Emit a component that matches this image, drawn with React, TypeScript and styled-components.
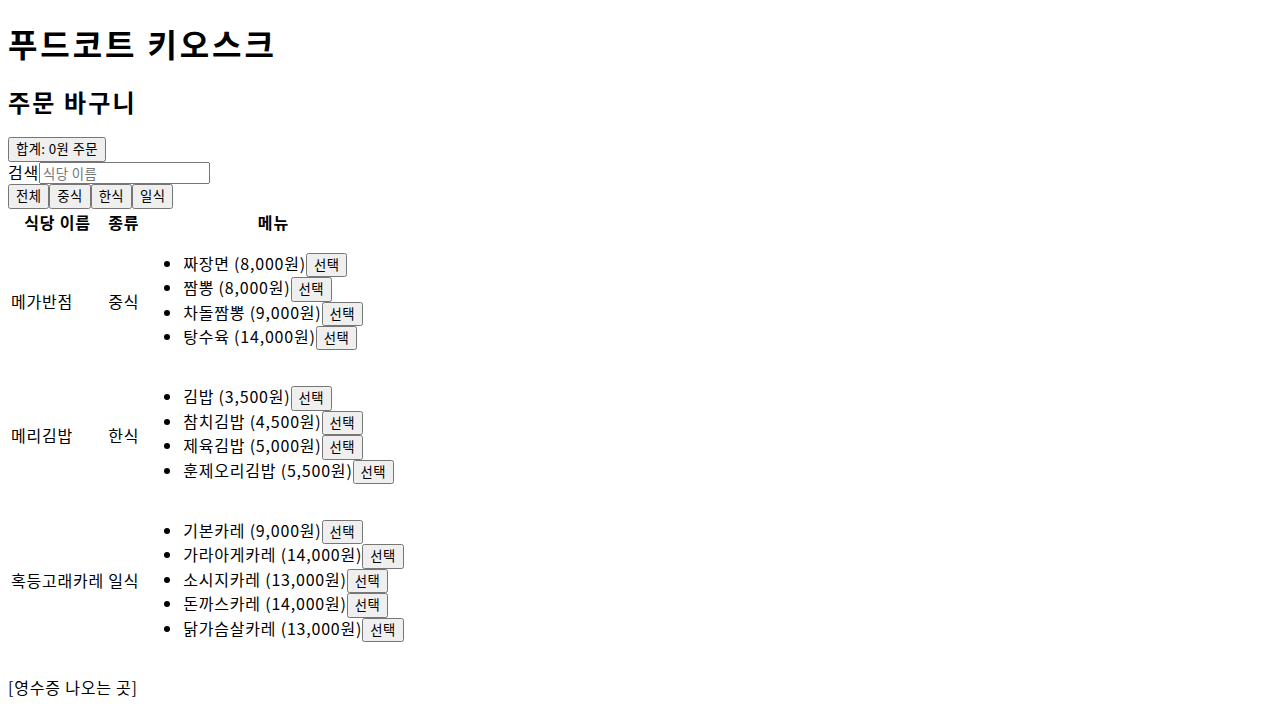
import React, { useState } from 'react'
import styled, { createGlobalStyle } from 'styled-components'

type MenuItem = { name: string; price: number }
type Restaurant = { name: string; kind: string; menus: MenuItem[] }

const restaurants: Restaurant[] = [
  {
    name: '메가반점',
    kind: '중식',
    menus: [
      { name: '짜장면', price: 8000 },
      { name: '짬뽕', price: 8000 },
      { name: '차돌짬뽕', price: 9000 },
      { name: '탕수육', price: 14000 },
    ],
  },
  {
    name: '메리김밥',
    kind: '한식',
    menus: [
      { name: '김밥', price: 3500 },
      { name: '참치김밥', price: 4500 },
      { name: '제육김밥', price: 5000 },
      { name: '훈제오리김밥', price: 5500 },
    ],
  },
  {
    name: '혹등고래카레',
    kind: '일식',
    menus: [
      { name: '기본카레', price: 9000 },
      { name: '가라아게카레', price: 14000 },
      { name: '소시지카레', price: 13000 },
      { name: '돈까스카레', price: 14000 },
      { name: '닭가슴살카레', price: 13000 },
    ],
  },
]

const kinds = ['전체', '중식', '한식', '일식']

const fontStack = `'Noto Sans CJK KR', 'Noto Sans', sans-serif`

const GlobalStyle = createGlobalStyle`
  body {
    margin: 8px;
    font-family: ${fontStack};
    font-size: 16px;
    line-height: 1.33;
    letter-spacing: 0.05em;
    color: #000;
    background: #fff;
  }
  button, input {
    font-family: ${fontStack};
    font-size: 13.33px;
    letter-spacing: 0.03em;
  }
`

const Title = styled.h1`
  font-size: 32px;
  font-weight: 700;
  letter-spacing: 0.09em;
  margin: 14px 0 21px;
`

const SubTitle = styled.h2`
  font-size: 24px;
  font-weight: 700;
  letter-spacing: 0.09em;
  margin: 19.92px 0;
`

const Block = styled.div``

const PlainButton = styled.button`
  padding: 1px 6px;
  margin: 0;
  line-height: 1.38;
  color: #000;
`

const SearchLabel = styled.label``

const SearchInput = styled.input`
  box-sizing: border-box;
  width: 171px;
  height: 22px;
  padding: 1px 2px;
  margin: 0;
  line-height: 1.33;
  &::placeholder {
    color: #757575;
  }
`

const MenuTable = styled.table`
  border-spacing: 2px;
`

const HeadCell = styled.th`
  padding: 1px;
  font-weight: 700;
`

const Cell = styled.td`
  padding: 1px;
  vertical-align: middle;
`

const MenuList = styled.ul`
  margin: 16px 0;
  padding-left: 40px;
  list-style: disc;
`

const Receipt = styled.p`
  margin: 16px 0;
`

const won = (n: number) => n.toLocaleString('en-US') + '원'

export default function App() {
  const [keyword, setKeyword] = useState('')
  const [kind, setKind] = useState('전체')

  const shown = restaurants.filter(
    (r) => (kind === '전체' || r.kind === kind) && r.name.includes(keyword)
  )

  return (
    <>
      <GlobalStyle />
      <Title>푸드코트 키오스크</Title>
      <SubTitle>주문 바구니</SubTitle>
      <Block>
        <PlainButton>합계: 0원 주문</PlainButton>
      </Block>
      <Block>
        <SearchLabel htmlFor='search'>검색</SearchLabel>
        <SearchInput
          id='search'
          placeholder='식당 이름'
          value={keyword}
          onChange={(e) => setKeyword(e.target.value)}
        />
      </Block>
      <Block>
        {kinds.map((k) => (
          <PlainButton key={k} onClick={() => setKind(k)}>
            {k}
          </PlainButton>
        ))}
      </Block>
      <MenuTable>
        <thead>
          <tr>
            <HeadCell>식당 이름</HeadCell>
            <HeadCell>종류</HeadCell>
            <HeadCell>메뉴</HeadCell>
          </tr>
        </thead>
        <tbody>
          {shown.map((r) => (
            <tr key={r.name}>
              <Cell>{r.name}</Cell>
              <Cell>{r.kind}</Cell>
              <Cell>
                <MenuList>
                  {r.menus.map((m) => (
                    <li key={m.name}>
                      {m.name} ({won(m.price)})<PlainButton>선택</PlainButton>
                    </li>
                  ))}
                </MenuList>
              </Cell>
            </tr>
          ))}
        </tbody>
      </MenuTable>
      <Receipt>[영수증 나오는 곳]</Receipt>
    </>
  )
}
